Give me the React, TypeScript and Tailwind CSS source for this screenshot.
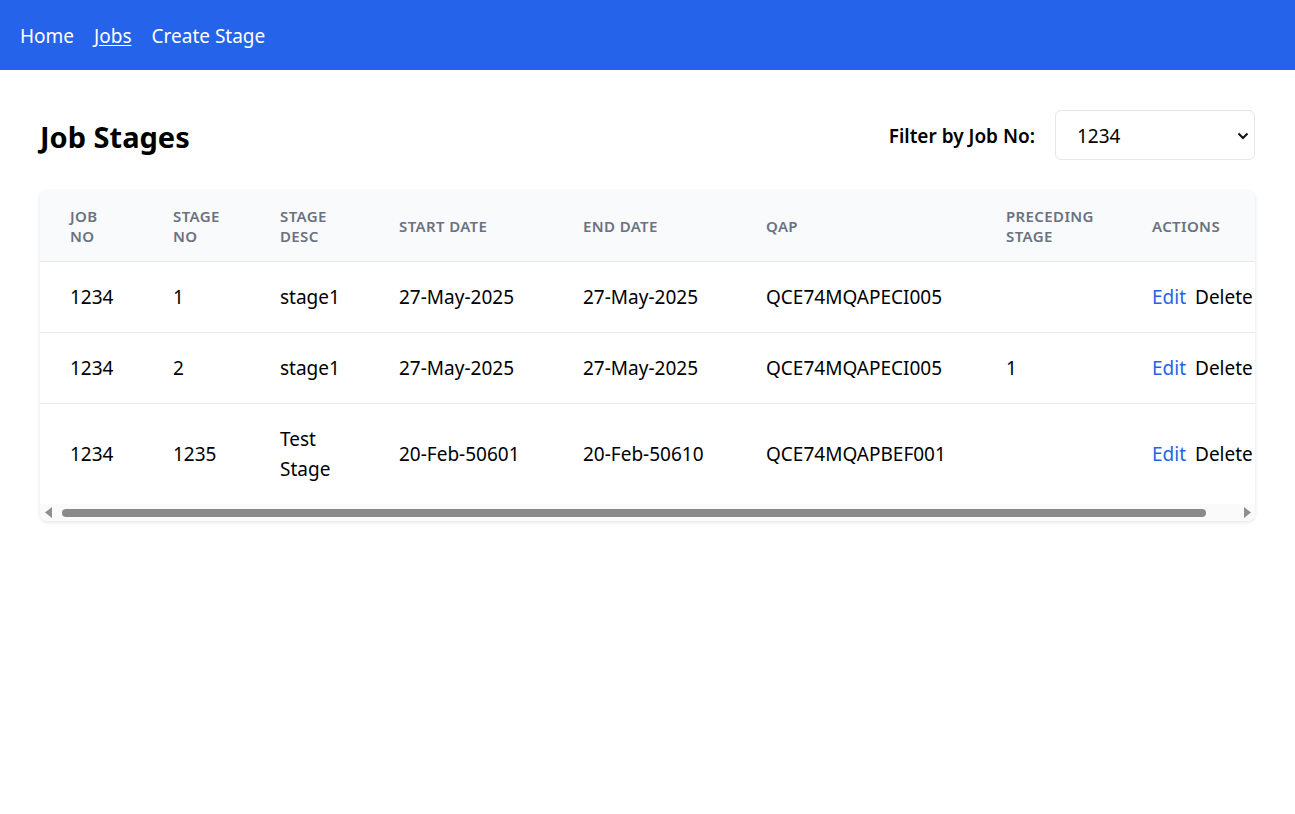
import React from "react"

type Stage = {
  jobNo: string
  stageNo: string
  desc: string
  start: string
  end: string
  qap: string
  preceding: string
}

const stages: Stage[] = [
  { jobNo: "1234", stageNo: "1", desc: "stage1", start: "27-May-2025", end: "27-May-2025", qap: "QCE74MQAPECI005", preceding: "" },
  { jobNo: "1234", stageNo: "2", desc: "stage1", start: "27-May-2025", end: "27-May-2025", qap: "QCE74MQAPECI005", preceding: "1" },
  { jobNo: "1234", stageNo: "1235", desc: "Test Stage", start: "20-Feb-50601", end: "20-Feb-50610", qap: "QCE74MQAPBEF001", preceding: "" },
]

const columns = [
  { label: "Job No", w: "w-[103px]" },
  { label: "Stage No", w: "w-[107px]" },
  { label: "Stage Desc", w: "w-[119px]" },
  { label: "Start Date", w: "w-[184px]" },
  { label: "End Date", w: "w-[183px]" },
  { label: "QAP", w: "w-[240px]" },
  { label: "Preceding Stage", w: "w-[146px]" },
  { label: "Actions", w: "w-[168px]" },
]

const cell = "pl-[30px] py-5 text-[19px] leading-[30px]"

export default function App() {
  return (
    <div className="min-h-screen bg-white text-black font-['Noto_Sans',sans-serif]">
      {/* Navbar */}
      <nav className="h-[70px] bg-[#2563eb] flex items-center px-5 pt-[2px] gap-5 text-white text-[19px]">
        <a href="#" className="hover:underline">Home</a>
        <a href="#" className="underline underline-offset-2">Jobs</a>
        <a href="#" className="hover:underline">Create Stage</a>
      </nav>

      <main className="px-10 pt-10">
        {/* Title + filter */}
        <div className="flex items-center justify-between h-[50px] mb-[31px]">
          <h1 className="text-[29px] font-bold pt-[3px]">Job Stages</h1>
          <div className="flex items-center gap-5">
            <label className="text-[19px] font-semibold pt-[2px]">Filter by Job No:</label>
            <div className="relative">
              <select className="appearance-none w-[200px] h-[50px] rounded-md border border-gray-200 bg-white pl-[21px] pr-8 pt-[2px] text-[19px] outline-none">
                <option>1234</option>
              </select>
              <svg
                className="pointer-events-none absolute right-[6px] top-[22px]"
                width="12"
                height="8"
                viewBox="0 0 12 8"
                fill="none"
              >
                <path d="M1.5 1.5 6 6l4.5-4.5" stroke="#111" strokeWidth="2" />
              </svg>
            </div>
          </div>
        </div>

        {/* Table card */}
        <div className="rounded-lg bg-white shadow-[0_1px_4px_rgba(0,0,0,0.12)] overflow-hidden">
          <div className="overflow-hidden">
            <table className="w-[1250px] table-fixed border-collapse text-left">
              <thead className="bg-gray-50">
                <tr className="border-b border-gray-200">
                  {columns.map((c) => (
                    <th
                      key={c.label}
                      className={`${c.w} pl-[30px] pr-6 py-[15px] text-[15px] leading-[20px] font-semibold uppercase tracking-wide text-gray-500 align-middle`}
                    >
                      {c.label}
                    </th>
                  ))}
                </tr>
              </thead>
              <tbody>
                {stages.map((s, i) => (
                  <tr key={i} className={i < stages.length - 1 ? "border-b border-gray-200" : ""}>
                    <td className={cell}>{s.jobNo}</td>
                    <td className={cell}>{s.stageNo}</td>
                    <td className={`${cell} pr-4`}>{s.desc}</td>
                    <td className={cell}>{s.start}</td>
                    <td className={cell}>{s.end}</td>
                    <td className={cell}>{s.qap}</td>
                    <td className={cell}>{s.preceding}</td>
                    <td className={`${cell} whitespace-nowrap`}>
                      <button className="text-[#2563eb] mr-[9px]">Edit</button>
                      <button className="text-black">Delete</button>
                    </td>
                  </tr>
                ))}
              </tbody>
            </table>
          </div>

          {/* Horizontal scrollbar */}
          <div className="h-[17px] flex items-center bg-[#fafafa]">
            <div className="w-4 flex justify-center">
              <svg width="7" height="11" viewBox="0 0 7 11">
                <path d="M7 0v11L0 5.5z" fill="#8f8f8f" />
              </svg>
            </div>
            <div className="flex-1 ml-[6px] mr-[33px] h-2 rounded-full bg-[#8a8a8a]" />
            <div className="w-4 flex justify-center">
              <svg width="7" height="11" viewBox="0 0 7 11">
                <path d="M0 0v11l7-5.5z" fill="#8f8f8f" />
              </svg>
            </div>
          </div>
        </div>
      </main>
    </div>
  )
}
